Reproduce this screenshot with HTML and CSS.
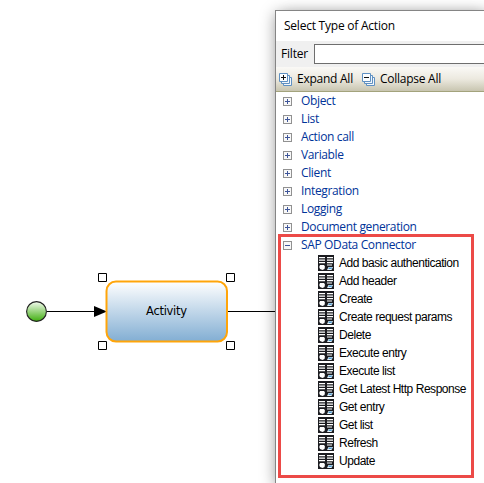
FILE: index.html
```html
<!DOCTYPE html>
<html lang="en">
<head>
<meta charset="utf-8">
<title>Select Type of Action</title>
<link rel="stylesheet" href="styles.css">
</head>
<body>
<svg class="defs" width="0" height="0" aria-hidden="true">
  <symbol id="action" viewBox="0 0 16 16">
    <path fill="#1b1c20" d="M0 0h16v16H0z"/>
    <path fill="#fff" d="M1 2h6v1.300H1zM1 4.500h6v1.300H1zM1 7h6v1.300H1zM9 2h6v1.300H9zM9 4.500h6v1.300H9zM9 7h6v1.300H9zM9 9.500h5v1H9z"/>
    <path fill="#fff" d="M2 10h4l1 1.500-.5 2.500L4.500 15 2 14l-.8-2z"/>
    <path d="M10.500 12h4.500l-1.500 3H9z" fill="#e8f4fc"/>
    <path d="M11 12.500h3.200l-.7 1.500h-3.200z" fill="#4a97cd"/>
  </symbol>
  <symbol id="plus" viewBox="0 0 9 9">
    <rect x=".5" y=".5" width="8" height="8" fill="#f8f8f8" stroke="#919191"/>
    <path d="M2 4.500h5M4.500 2v5" stroke="#3e5599"/>
  </symbol>
  <symbol id="minus" viewBox="0 0 9 9">
    <rect x=".5" y=".5" width="8" height="8" fill="#f8f8f8" stroke="#919191"/>
    <path d="M2 4.500h5" stroke="#3e5599"/>
  </symbol>
  <symbol id="stack" viewBox="0 0 13 13">
    <path d="M4.500 4.500h8v8h-8z" fill="#f3f7fb" stroke="#5f90c2"/>
    <path d="M2.500 2.500h8v8h-8z" fill="#f3f7fb" stroke="#5f90c2"/>
    <path d="M.5.5h8v8h-8z" fill="#fbfdfe" stroke="#5f90c2"/>
  </symbol>
</svg>
<svg class="flow" width="275" height="483" viewBox="0 0 275 483">
  <defs>
    <linearGradient id="green" x1="0" y1="0" x2="0" y2="1"><stop offset="0" stop-color="#f4fbf0"/><stop offset="1" stop-color="#3fae0e"/></linearGradient>
    <linearGradient id="blue" x1="0" y1="0" x2="0" y2="1"><stop offset="0" stop-color="#fff"/><stop offset="1" stop-color="#82aed3"/></linearGradient>
  </defs>
  <path d="M47 311.500h50M228 311.500h47" stroke="#000"/>
  <circle cx="36.500" cy="311.500" r="9.900" fill="url(#green)" stroke="#222" stroke-width="1.100"/>
  <path d="M94 306l13 5.500-13 5.500z"/>
  <rect x="106.500" y="281.500" width="120.500" height="60" rx="9.500" fill="url(#blue)" stroke="#ffa50a" stroke-width="2"/>
  <path d="M98.500 273.500h8v8h-8zM226.500 273.500h8v8h-8zM98.500 341.500h8v8h-8zM226.500 341.500h8v8h-8z" fill="#fff" stroke="#000"/>
  <text class="node-label" x="146" y="315" textLength="41">Activity</text>
</svg>
<main class="dialog">
  <header class="title"><span>Select Type of Action</span></header>
  <div class="filter"><label for="f">Filter</label><input id="f" type="text"></div>
  <div class="toolbar">
    <span class="tool"><svg width="13" height="13"><use href="#stack"/><path d="M2 4.500h5M4.500 2v5" stroke="#111"/></svg><span>Expand All</span></span>
    <span class="tool"><svg width="13" height="13"><use href="#stack"/><path d="M2 4.500h5" stroke="#111"/></svg><span>Collapse All</span></span>
  </div>
  <ul class="tree">
    <li><svg width="9" height="9"><use href="#plus"/></svg><span>Object</span></li>
    <li><svg width="9" height="9"><use href="#plus"/></svg><span>List</span></li>
    <li><svg width="9" height="9"><use href="#plus"/></svg><span>Action call</span></li>
    <li><svg width="9" height="9"><use href="#plus"/></svg><span>Variable</span></li>
    <li><svg width="9" height="9"><use href="#plus"/></svg><span>Client</span></li>
    <li><svg width="9" height="9"><use href="#plus"/></svg><span>Integration</span></li>
    <li><svg width="9" height="9"><use href="#plus"/></svg><span>Logging</span></li>
    <li><svg width="9" height="9"><use href="#plus"/></svg><span>Document generation</span></li>
    <li><svg width="9" height="9"><use href="#minus"/></svg><span>SAP OData Connector</span></li>
  </ul>
  <ul class="actions">
    <li><svg width="16" height="16"><use href="#action"/></svg><span>Add basic authentication</span></li>
    <li><svg width="16" height="16"><use href="#action"/></svg><span>Add header</span></li>
    <li><svg width="16" height="16"><use href="#action"/></svg><span>Create</span></li>
    <li><svg width="16" height="16"><use href="#action"/></svg><span>Create request params</span></li>
    <li><svg width="16" height="16"><use href="#action"/></svg><span>Delete</span></li>
    <li><svg width="16" height="16"><use href="#action"/></svg><span>Execute entry</span></li>
    <li><svg width="16" height="16"><use href="#action"/></svg><span>Execute list</span></li>
    <li><svg width="16" height="16"><use href="#action"/></svg><span>Get Latest Http Response</span></li>
    <li><svg width="16" height="16"><use href="#action"/></svg><span>Get entry</span></li>
    <li><svg width="16" height="16"><use href="#action"/></svg><span>Get list</span></li>
    <li><svg width="16" height="16"><use href="#action"/></svg><span>Refresh</span></li>
    <li><svg width="16" height="16"><use href="#action"/></svg><span>Update</span></li>
  </ul>
  <div class="highlight"></div>
</main>
</body>
</html>
```
FILE: styles.css
```css
* { box-sizing: border-box; }
body {
  margin: 0;
  width: 484px;
  height: 483px;
  overflow: hidden;
  display: flex;
  background: #fff;
  font: 12px/18px "Open Sans", "Noto Sans", sans-serif;
  color: #000;
}
.defs { position: absolute; }
.flow { flex: none; display: block; }
.node-label { font: 11.5px "DejaVu Sans", sans-serif; }
svg { flex: none; }
.dialog {
  position: relative;
  flex: none;
  width: 209px;
  height: 473px;
  margin-top: 10px;
  border: solid #858585;
  border-width: 1px 0 0 1px;
  background: #fff;
  box-shadow: 0 3px 14px rgba(0, 0, 0, .38), 12px 3px 14px rgba(0, 0, 0, .15);
}
.title { height: 30px; padding: 6px 0 0 8px; letter-spacing: -.23px; }
.filter {
  height: 26px;
  display: flex;
  align-items: center;
  background: #f0f0f0;
  padding-left: 5px;
}
.filter label { width: 33px; flex: none; letter-spacing: -.2px; }
.filter input {
  width: 0;
  flex: 1;
  height: 20px;
  border: solid #6e6e6e;
  border-width: 1px 0 1px 1px;
  background: #fff;
  padding: 0 4px;
}
.toolbar {
  height: 25px;
  display: flex;
  gap: 9px;
  padding-left: 3px;
  background: linear-gradient(#faf9f6, #ece9df 50%, #c8c5b0);
  border-bottom: 1px solid #a3a37c;
}
.tool { display: flex; align-items: center; gap: 5px; letter-spacing: -.25px; }
ul { list-style: none; margin: 0; padding: 0; }
.tree { color: #003399; letter-spacing: -.36px; }
li { height: 18px; display: flex; align-items: center; white-space: nowrap; }
.tree li { padding-left: 7px; gap: 9px; }
.actions { font-family: "Liberation Sans", Arial, sans-serif; letter-spacing: -.46px; }
.actions li { padding-left: 42px; gap: 5px; }
.highlight {
  position: absolute;
  left: 2px;
  top: 223px;
  width: 196px;
  height: 244px;
  border: 3px solid #ec4a47;
}
```
